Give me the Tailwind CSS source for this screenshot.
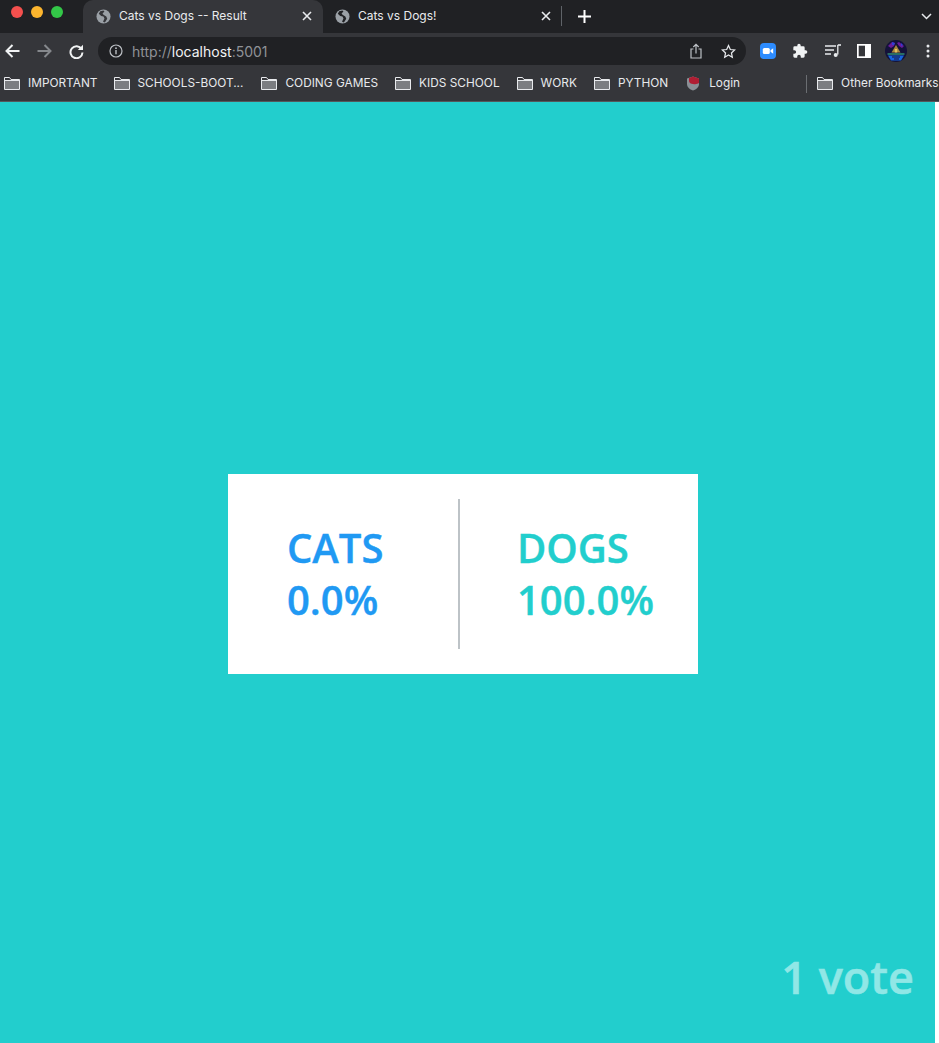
<!DOCTYPE html>
<html lang="en">
<head>
    <meta charset="UTF-8">
    <meta name="viewport" content="width=device-width, initial-scale=1.0">
    <title>Cats vs Dogs -- Result</title>
    <script src="https://cdn.jsdelivr.net/npm/@tailwindcss/browser@4"></script>
</head>
<body class="bg-white font-['Inter','Liberation_Sans',sans-serif] overflow-hidden">
<div class="flex flex-col h-[1043px] w-[939px]">

    <!-- tab strip -->
    <div class="flex items-stretch h-[33px] bg-[#202124] text-white text-[12px]">
        <div class="flex items-center gap-[8px] w-[83px] pl-[11px] pb-[9px]">
            <span class="w-[12px] h-[12px] rounded-full bg-[#f4504e]"></span>
            <span class="w-[12px] h-[12px] rounded-full bg-[#fcb52e]"></span>
            <span class="w-[12px] h-[12px] rounded-full bg-[#33c748]"></span>
        </div>
        <div class="flex items-center w-[240px] pl-[13px] pr-[11px] pb-[1px] bg-[#35363a] rounded-t-[10px]">
            <svg class="w-[15px] h-[15px] mr-[8px] shrink-0" viewBox="0 0 16 16">
                <circle cx="8" cy="8" r="7.5" fill="#9aa0a6"/>
                <path d="M8 1.5 4.5 2.5 3 5l2.5 2.5L8 8l1 2-1.5 3.5 2 1 2.5-4-1-2.5L8 6 7 4.5l2-1.5Z" fill="#35363a"/>
            </svg>
            <span class="flex-1 truncate text-[#e8eaed]">Cats vs Dogs -- Result</span>
            <svg class="w-[10px] h-[10px]" viewBox="0 0 10 10"><path d="M1 1l8 8M9 1l-8 8" stroke="#e8eaed" stroke-width="1.6"/></svg>
        </div>
        <div class="flex items-center w-[238px] pl-[12px] pr-[10px] pb-[1px]">
            <svg class="w-[15px] h-[15px] mr-[8px] shrink-0" viewBox="0 0 16 16">
                <circle cx="8" cy="8" r="7.5" fill="#9aa0a6"/>
                <path d="M8 1.5 4.5 2.5 3 5l2.5 2.5L8 8l1 2-1.5 3.5 2 1 2.5-4-1-2.5L8 6 7 4.5l2-1.5Z" fill="#202124"/>
            </svg>
            <span class="flex-1 truncate text-[#e8eaed]">Cats vs Dogs!</span>
            <svg class="w-[10px] h-[10px]" viewBox="0 0 10 10"><path d="M1 1l8 8M9 1l-8 8" stroke="#e8eaed" stroke-width="1.6"/></svg>
        </div>
        <div class="w-px h-[20px] mt-[6px] bg-[#5f6368]"></div>
        <div class="flex items-center pl-[16px] flex-1 pb-[1px]">
            <svg class="w-[13px] h-[13px]" viewBox="0 0 13 13"><path d="M6.5 0v13M0 6.5h13" stroke="#fff" stroke-width="2"/></svg>
        </div>
        <div class="flex items-center pr-[7px]">
            <svg class="w-[11px] h-[7px]" viewBox="0 0 11 7"><path d="M1 1l4.500 4.500L10 1" fill="none" stroke="#e8eaed" stroke-width="1.500"/></svg>
        </div>
    </div>

    <!-- toolbar -->
    <div class="flex items-center h-[33px] bg-[#35363a] pt-[3px]">
        <div class="flex items-center w-[98px] pl-[5px]">
            <svg class="w-[15px] h-[14px]" viewBox="0 0 15 14"><path d="M14.500 7H1.500M7.500 1l-6 6 6 6" fill="none" stroke="#f1f3f4" stroke-width="2"/></svg>
            <svg class="w-[15px] h-[14px] ml-[17px]" viewBox="0 0 15 14"><path d="M.5 7h13M7.500 1l6 6-6 6" fill="none" stroke="#85888c" stroke-width="2"/></svg>
            <svg class="w-[15px] h-[15px] ml-[17px]" viewBox="0 0 15 15"><path d="M12.600 5A6 6 0 1 0 13.500 8.500" fill="none" stroke="#f1f3f4" stroke-width="2"/><path d="M14 .8V6H8.800Z" fill="#f1f3f4"/></svg>
        </div>
        <div class="flex items-center w-[648px] h-[28px] rounded-full bg-[#202124] pl-[11px] pr-[10px]">
            <svg class="w-[14px] h-[14px] mr-[9px]" viewBox="0 0 14 14">
                <circle cx="7" cy="7" r="6" fill="none" stroke="#bdc1c6" stroke-width="1.200"/>
                <path d="M7 6v4.200" stroke="#bdc1c6" stroke-width="1.400"/>
                <circle cx="7" cy="4.200" r=".9" fill="#bdc1c6"/>
            </svg>
            <span class="flex-1 text-[14px] text-[#8f9297]">http://<span class="text-[#f1f3f4]">localhost</span>:5001</span>
            <svg class="w-[12px] h-[16px] mr-[19px]" viewBox="0 0 12 16">
                <path d="M3.500 6H1v9h10V6H8.500" fill="none" stroke="#bdc1c6" stroke-width="1.200"/>
                <path d="M6 10.500V1.500M3.300 4 6 1.300 8.700 4" fill="none" stroke="#bdc1c6" stroke-width="1.200"/>
            </svg>
            <svg class="w-[15px] h-[15px]" viewBox="0 0 24 24"><path d="M12 2.500l2.900 6.300 6.900.8-5.100 4.700 1.400 6.800L12 17.700l-6.100 3.400 1.400-6.800-5.100-4.700 6.900-.8Z" fill="none" stroke="#e8eaed" stroke-width="2"/></svg>
        </div>
        <div class="flex items-center flex-1 pl-[14px]">
            <svg class="w-[16px] h-[16px]" viewBox="0 0 16 16">
                <rect width="16" height="16" rx="4" fill="#2d8cff"/>
                <rect x="2.800" y="5" width="7" height="6" rx="1.500" fill="#fff"/>
                <path d="M10.500 7.300 13.200 5.300v5.400L10.500 8.700Z" fill="#fff"/>
            </svg>
            <svg class="w-[16px] h-[16px] ml-[16px]" viewBox="0 0 24 24"><path d="M20.500 11H19V7a2 2 0 0 0-2-2h-4V3.500a2.500 2.500 0 0 0-5 0V5H4a2 2 0 0 0-2 2v3.800h1.500a2.700 2.700 0 0 1 0 5.400H2V20a2 2 0 0 0 2 2h3.800v-1.500a2.700 2.700 0 0 1 5.400 0V22H17a2 2 0 0 0 2-2v-4h1.500a2.500 2.500 0 0 0 0-5Z" fill="#f1f3f4"/></svg>
            <svg class="w-[16px] h-[14px] ml-[17px]" viewBox="0 0 16 14" fill="none" stroke="#e8eaed">
                <path d="M0 2h11M0 6h9M0 10h6" stroke-width="1.300"/>
                <path d="M12.800 1v9.500" stroke-width="1.300"/>
                <path d="M12.800 1H16" stroke-width="1.600"/>
                <circle cx="10.700" cy="11" r="2" fill="#e8eaed" stroke="none"/>
            </svg>
            <svg class="w-[14px] h-[14px] ml-[16px]" viewBox="0 0 14 14">
                <rect width="14" height="14" fill="#fff"/>
                <rect x="1.700" y="1.700" width="6.300" height="10.600" fill="#35363a"/>
            </svg>
            <svg class="w-[22px] h-[22px] ml-[14px]" viewBox="0 0 22 22">
                <circle cx="11" cy="11" r="11" fill="#14123a"/>
                <path d="M3 6l4-4 3 1-1 3-3 2ZM14 2l5 4-2 2-3-2-2-3Z" fill="#6a1b9a"/>
                <path d="M7 2l3 1-1 2-2 0ZM16 3l2 2-2 1Z" fill="#2f3fd8"/>
                <path d="M11 5 15.500 12.500h-9Z" fill="#a8843a"/>
                <path d="M9.800 9h2.400v3.500H9.800Z" fill="#e0c060"/>
                <path d="M2.500 14h17" stroke="#3ec98a" stroke-width="1"/>
                <path d="M3 15.500h16l-3 5H6Z" fill="#1565e0"/>
                <path d="M7 17h8M9 19h5" stroke="#14123a" stroke-width="1"/>
            </svg>
            <svg class="w-[4px] h-[14px] ml-[19px]" viewBox="0 0 4 14"><circle cx="2" cy="2" r="1.500" fill="#e8eaed"/><circle cx="2" cy="7" r="1.500" fill="#e8eaed"/><circle cx="2" cy="12" r="1.500" fill="#e8eaed"/></svg>
        </div>
    </div>

    <!-- bookmarks bar -->
    <div class="flex items-center h-[36px] bg-[#35363a] border-b border-[#55575b] text-[11.850px] text-[#e8eaed] whitespace-nowrap">
        <span class="flex items-center gap-[8px] ml-[4px]">
            <svg class="w-[16px] h-[13px]" viewBox="0 0 16 13"><path d="M1 4h14v8H1Z" fill="#7b7d81"/><path d="M.5 12.500V.5h5l1.500 2h8.500v10ZM.5 3.500h15" fill="none" stroke="#e8eaed"/></svg>
            IMPORTANT
        </span>
        <span class="flex items-center gap-[8px] ml-[16px]">
            <svg class="w-[16px] h-[13px]" viewBox="0 0 16 13"><path d="M1 4h14v8H1Z" fill="#7b7d81"/><path d="M.5 12.500V.5h5l1.500 2h8.500v10ZM.5 3.500h15" fill="none" stroke="#e8eaed"/></svg>
            SCHOOLS-BOOT...
        </span>
        <span class="flex items-center gap-[8px] ml-[18px]">
            <svg class="w-[16px] h-[13px]" viewBox="0 0 16 13"><path d="M1 4h14v8H1Z" fill="#7b7d81"/><path d="M.5 12.500V.5h5l1.500 2h8.500v10ZM.5 3.500h15" fill="none" stroke="#e8eaed"/></svg>
            CODING GAMES
        </span>
        <span class="flex items-center gap-[8px] ml-[17px]">
            <svg class="w-[16px] h-[13px]" viewBox="0 0 16 13"><path d="M1 4h14v8H1Z" fill="#7b7d81"/><path d="M.5 12.500V.5h5l1.500 2h8.500v10ZM.5 3.500h15" fill="none" stroke="#e8eaed"/></svg>
            KIDS SCHOOL
        </span>
        <span class="flex items-center gap-[8px] ml-[17px]">
            <svg class="w-[16px] h-[13px]" viewBox="0 0 16 13"><path d="M1 4h14v8H1Z" fill="#7b7d81"/><path d="M.5 12.500V.5h5l1.500 2h8.500v10ZM.5 3.500h15" fill="none" stroke="#e8eaed"/></svg>
            WORK
        </span>
        <span class="flex items-center gap-[8px] ml-[17px]">
            <svg class="w-[16px] h-[13px]" viewBox="0 0 16 13"><path d="M1 4h14v8H1Z" fill="#7b7d81"/><path d="M.5 12.500V.5h5l1.500 2h8.500v10ZM.5 3.500h15" fill="none" stroke="#e8eaed"/></svg>
            PYTHON
        </span>
        <span class="flex items-center gap-[9px] ml-[18px]">
            <svg class="w-[14px] h-[15px]" viewBox="0 0 14 15">
                <path d="M7 .5 13 2.500V8c0 3-2.500 5.500-6 6.500C3.500 13.500 1 11 1 8V2.500Z" fill="#8a9096"/>
                <path d="M7 .5 13 2.500V7c-1.500 1-3 1.500-6 1C5 8 3 7 3 5V2Z" fill="#b01e33"/>
            </svg>
            Login
        </span>
        <span class="w-px h-[18px] ml-[66px] bg-[#6b6e72]"></span>
        <span class="flex items-center gap-[8px] ml-[10px]">
            <svg class="w-[16px] h-[13px]" viewBox="0 0 16 13"><path d="M1 4h14v8H1Z" fill="#7b7d81"/><path d="M.5 12.500V.5h5l1.500 2h8.500v10ZM.5 3.500h15" fill="none" stroke="#e8eaed"/></svg>
            Other Bookmarks
        </span>
    </div>

    <!-- page -->
    <div class="flex-1 flex">
        <main class="relative w-[935px] bg-[#22cecd] pt-[372px] pl-[228px] font-['Open_Sans',sans-serif]">
            <div class="flex items-center w-[470px] h-[200px] bg-white">
                <div class="w-[230px] pl-[59px] text-[40px] leading-[52px] font-semibold [-webkit-text-stroke-width:0.4px] text-[#2099f3]">
                    <div>CATS</div>
                    <div>0.0%</div>
                </div>
                <div class="w-[2px] h-[150px] bg-[#bdc3c7]"></div>
                <div class="pl-[57px] text-[40px] leading-[52px] font-semibold [-webkit-text-stroke-width:0.4px] text-[#22cecd]">
                    <div>DOGS</div>
                    <div>100.0%</div>
                </div>
            </div>
            <div class="absolute right-[21px] bottom-[35px] text-[45px] leading-[62px] font-semibold [-webkit-text-stroke-width:0.6px] text-[#90e7e6]">1 vote</div>
        </main>
    </div>
</div>
</body>
</html>
